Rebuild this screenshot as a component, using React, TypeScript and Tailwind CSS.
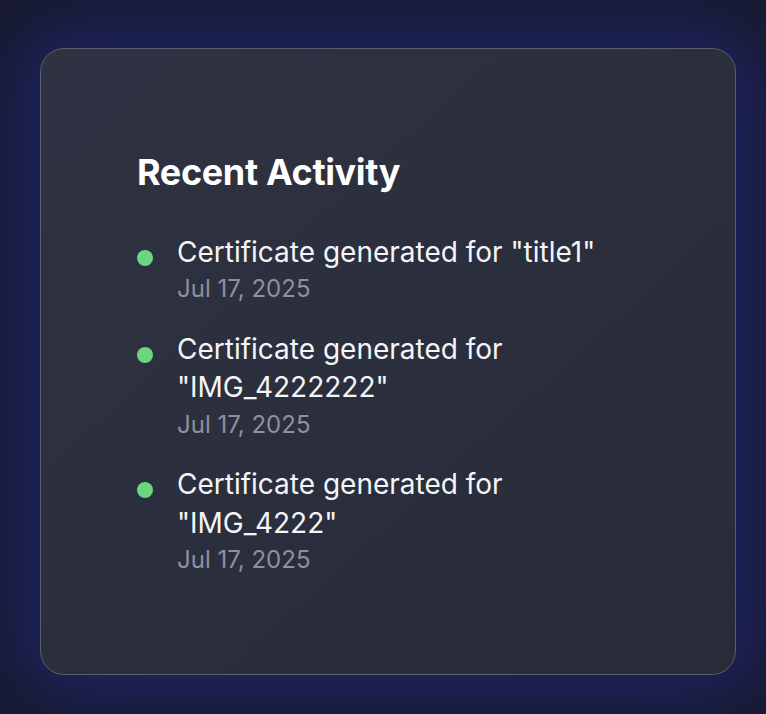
import React from "react";

const items = [
  { title: 'Certificate generated for "title1"', date: "Jul 17, 2025" },
  { title: 'Certificate generated for "IMG_4222222"', date: "Jul 17, 2025" },
  { title: 'Certificate generated for "IMG_4222"', date: "Jul 17, 2025" },
];

export default function App() {
  return (
    <div
      className="w-[766px] h-[714px] overflow-hidden bg-[#171a2e] pt-[48px] pl-[40px]"
      style={{ fontFamily: "Inter, 'Noto Sans', sans-serif" }}
    >
      <div className="w-[696px] h-[627px] rounded-[24px] border border-[#5a5f70] bg-gradient-to-br from-[#2e3242] to-[#282c38] shadow-[0_0_70px_20px_rgba(34,40,120,0.75)] px-[96px] pt-[102px]">
        <h2 className="text-[36px] leading-[43px] font-bold text-white tracking-[-0.01em]">
          Recent Activity
        </h2>
        <ul className="mt-[39px] flex flex-col gap-[24px]">
          {items.map((it, i) => (
            <li key={i} className="flex items-start gap-[24px]">
              <span className="mt-[17px] w-[16px] h-[16px] rounded-full bg-[#6bd580] shrink-0" />
              <div className="flex-1">
                <div className="text-[28px] leading-[38.4px] text-[#f4f5f7]">{it.title}</div>
                <div className="mt-[1px] text-[24px] leading-[33.6px] text-[#8c919e]">{it.date}</div>
              </div>
            </li>
          ))}
        </ul>
      </div>
    </div>
  );
}
